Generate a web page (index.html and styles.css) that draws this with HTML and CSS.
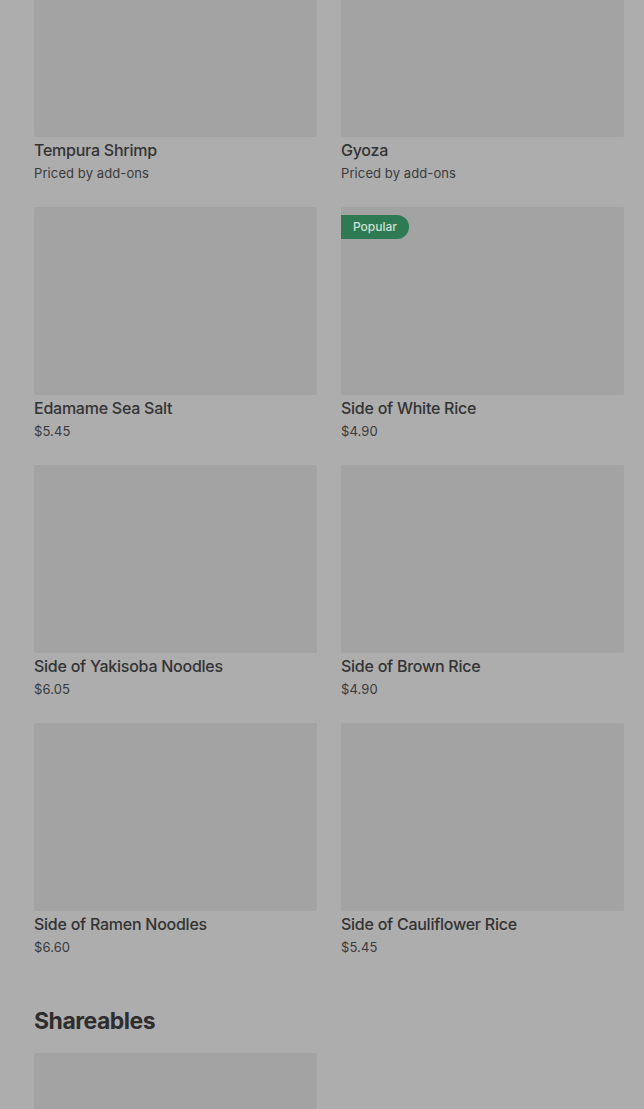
FILE: index.html
```html
<!DOCTYPE html>
<html>
<head>
<meta charset="utf-8">
<link rel="stylesheet" href="styles.css">
</head>
<body>
<div class="page">
  <section class="grid">
    <div class="card"><div class="img"></div><div class="title">Tempura Shrimp</div><div class="price">Priced by add-ons</div></div>
    <div class="card"><div class="img"></div><div class="title">Gyoza</div><div class="price">Priced by add-ons</div></div>
    <div class="card"><div class="img"></div><div class="title">Edamame Sea Salt</div><div class="price">$5.45</div></div>
    <div class="card"><div class="img"><span class="badge">Popular</span></div><div class="title">Side of White Rice</div><div class="price">$4.90</div></div>
    <div class="card"><div class="img"></div><div class="title">Side of Yakisoba Noodles</div><div class="price">$6.05</div></div>
    <div class="card"><div class="img"></div><div class="title">Side of Brown Rice</div><div class="price">$4.90</div></div>
    <div class="card"><div class="img"></div><div class="title">Side of Ramen Noodles</div><div class="price">$6.60</div></div>
    <div class="card"><div class="img"></div><div class="title">Side of Cauliflower Rice</div><div class="price">$5.45</div></div>
  </section>
  <h2 class="heading">Shareables</h2>
  <section class="grid">
    <div class="card"><div class="img"></div></div>
  </section>
</div>
</body>
</html>
```
FILE: styles.css
```css
html, body {
  margin: 0;
  padding: 0;
  background: #adadad;
  overflow: hidden;
}
body {
  font-family: Inter, "Noto Sans", sans-serif;
  color: #333333;
}
.page {
  padding: 0 20px 0 34px;
  margin-top: -51px;
}
.grid {
  display: grid;
  grid-template-columns: 283px 283px;
  column-gap: 24px;
  row-gap: 25px;
}
.card {
  display: flex;
  flex-direction: column;
}
.img {
  position: relative;
  height: 188px;
  background: #a3a3a3;
  border-radius: 2px;
}
.badge {
  position: absolute;
  top: 8px;
  left: 0;
  height: 24px;
  line-height: 24px;
  padding: 0 12px 0 12px;
  background: #2e7b53;
  color: #cfe0d6;
  font-size: 12px;
  font-weight: 500;
  border-radius: 0 12px 12px 0;
}
.title {
  margin-top: 3px;
  font-size: 16px;
  line-height: 20px;
  font-weight: 500;
  letter-spacing: -0.25px;
  color: #333;
}
.price {
  margin-top: 4px;
  font-size: 13px;
  line-height: 18px;
  letter-spacing: 0.1px;
  color: #3a3a3a;
}
.heading {
  margin: 49px 0 16px;
  font-size: 23px;
  line-height: 32px;
  font-weight: 700;
  color: #2e2e2e;
  letter-spacing: -0.5px;
}
```
